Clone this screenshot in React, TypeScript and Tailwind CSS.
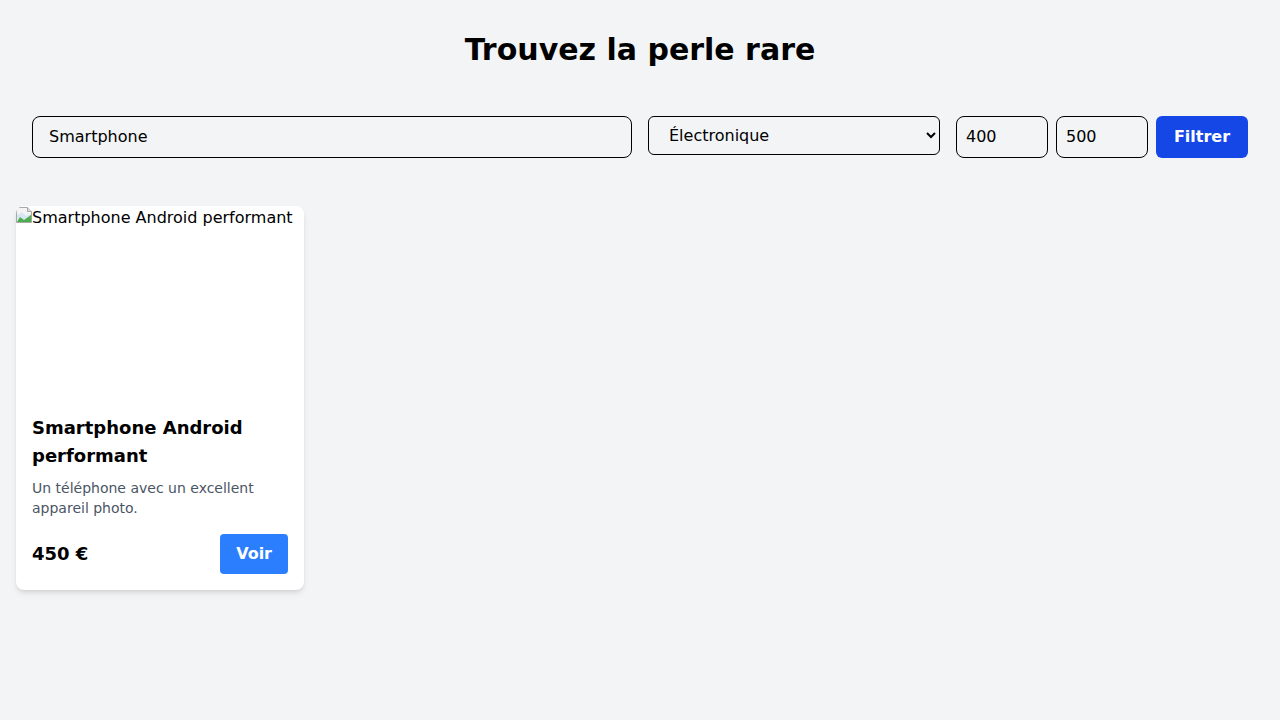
import React from "react";

export default function App() {
  const font = { fontFamily: '"DejaVu Sans", sans-serif' };
  return (
    <div className="min-h-screen bg-[#f3f4f6] p-4 text-black" style={font}>
      <h1 className="mt-4 text-center text-3xl font-bold leading-9">Trouvez la perle rare</h1>
      <form className="mt-8 flex items-start gap-4 p-4" onSubmit={(e) => e.preventDefault()}>
        <input
          type="text"
          defaultValue="Smartphone"
          className="h-[42px] w-[600px] rounded-lg border border-black bg-transparent px-4 pb-[2px] text-base"
          style={font}
        />
        <select
          defaultValue="electronique"
          className="h-[39px] w-[292px] rounded-md border border-black bg-transparent px-4 text-base"
          style={font}
        >
          <option value="electronique">Électronique</option>
        </select>
        <div className="flex gap-2">
          <input
            type="number"
            defaultValue={400}
            className="h-[42px] w-[92px] rounded-lg border border-black bg-transparent px-[9px] pb-[2px] text-base"
            style={font}
          />
          <input
            type="number"
            defaultValue={500}
            className="h-[42px] w-[92px] rounded-lg border border-black bg-transparent px-[9px] pb-[2px] text-base"
            style={font}
          />
          <button
            type="submit"
            className="h-[42px] w-[92px] rounded-md bg-[#1447e6] text-base font-bold text-white"
            style={font}
          >
            Filtrer
          </button>
        </div>
      </form>
      <div className="mt-8 flex">
        <div className="w-72 overflow-hidden rounded-lg bg-white shadow-md">
          <div className="flex h-48 items-start">
            <div className="flex items-start text-base leading-[22px]">
              <svg width="16" height="16" viewBox="0 0 16 16" className="mt-[1px] block h-4 w-4 shrink-0">
                <path d="M0.5 0.5h11l4 4v11h-15z" fill="#f4f4f4" stroke="#a8a8a8" />
                <path d="M1 8l5 -3 4 4 5 -2v8h-14z" fill="#c7dcf0" opacity="0.6" />
                <path d="M1 15l3 -5 4 3 7 -5v7z" fill="#4cae4c" />
                <path d="M11.5 0.5v4h4" fill="#ddd" stroke="#a8a8a8" />
              </svg>
              <span className="mt-[1px]">Smartphone Android performant</span>
            </div>
          </div>
          <div className="p-4">
            <h2 className="text-lg font-bold leading-7">Smartphone Android performant</h2>
            <p className="mt-2 text-sm leading-5 text-[#4a5565]">Un téléphone avec un excellent appareil photo.</p>
            <div className="mt-4 flex items-center justify-between">
              <span className="text-lg font-bold">450 €</span>
              <button className="h-10 rounded bg-[#2b7fff] px-4 text-base font-bold text-white" style={font}>
                Voir
              </button>
            </div>
          </div>
        </div>
      </div>
    </div>
  );
}
